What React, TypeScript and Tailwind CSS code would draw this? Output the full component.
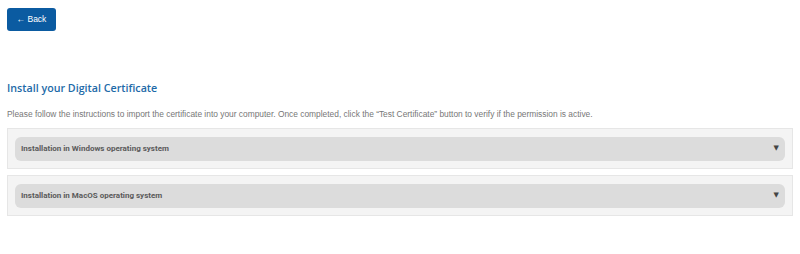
import React from "react";

function AccordionItem({ title }: { title: string }) {
  return (
    <div className="border border-[#e6e6e6] bg-[#f4f4f4] px-[7px] pb-[7px] pt-[8px]">
      <button className="flex h-[24px] w-full items-center justify-between rounded-[6px] bg-[#dcdcdc] pl-[6px] pr-[6px] text-left">
        <span className="font-['Roboto',sans-serif] text-[8px] font-bold text-[#5a5a5a]">{title}</span>
        <span className="font-['DejaVu_Sans',sans-serif] text-[7px] leading-none text-[#444]">▼</span>
      </button>
    </div>
  );
}

export default function App() {
  return (
    <div className="min-h-[254px] w-full bg-white px-[7px] pt-[8px]">
      <button className="flex h-[23px] w-[49px] items-center justify-center rounded-[3px] bg-[#0b5ba1] font-['Liberation_Sans',sans-serif] text-[8.5px] text-white">
        ← Back
      </button>
      <h1 className="mt-[49px] font-['Open_Sans',sans-serif] text-[10.7px] font-semibold text-[#1d6aa8]">
        Install your Digital Certificate
      </h1>
      <p className="mt-[12px] font-['Liberation_Sans',sans-serif] text-[8.4px] text-[#777]">
        Please follow the instructions to import the certificate into your computer. Once completed, click the “Test Certificate” button to verify if the permission is active.
      </p>
      <div className="mt-[7px] flex w-[786px] flex-col gap-[6px]">
        <AccordionItem title="Installation in Windows operating system" />
        <AccordionItem title="Installation in MacOS operating system" />
      </div>
    </div>
  );
}
